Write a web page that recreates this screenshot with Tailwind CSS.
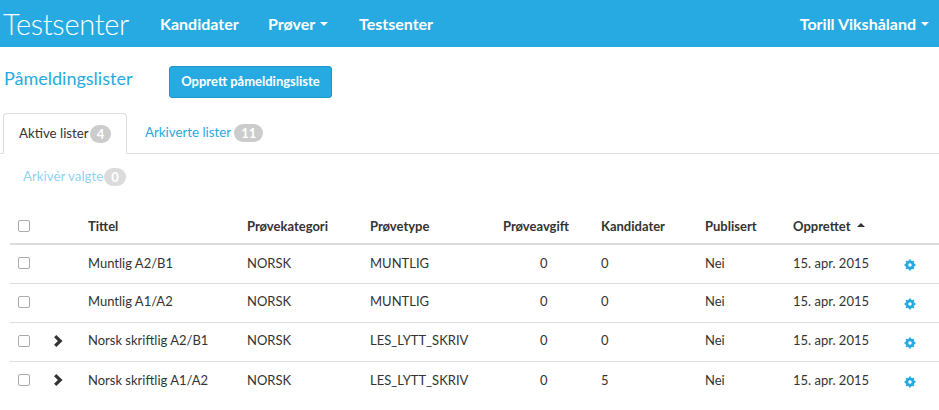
<!DOCTYPE html>
<html lang="en">
<head>
  <meta charset="UTF-8" />
  <title>Testsenter</title>
  <script src="https://cdn.jsdelivr.net/npm/@tailwindcss/browser@4"></script>
</head>
<body class="bg-white font-['Lato',sans-serif] text-[13px] text-[#333] overflow-hidden">

  <!-- navbar -->
  <nav class="bg-[#27aae1] h-[47px] flex items-center text-white">
    <div class="text-[29px] font-light tracking-[-0.3px] ml-[3px] w-[157px] leading-none">Testsenter</div>
    <div class="flex text-[16px] font-bold">
      <a class="w-[108px]">Kandidater</a>
      <a class="w-[91px] flex items-center">Prøver <span class="ml-[5px] w-0 h-0 border-x-4 border-x-transparent border-t-4 border-t-white"></span></a>
      <a>Testsenter</a>
    </div>
    <div class="ml-auto mr-[10px] text-[16px] font-bold flex items-center">Torill Vikshåland <span class="ml-[5px] w-0 h-0 border-x-4 border-x-transparent border-t-4 border-t-white"></span></div>
  </nav>

  <!-- heading -->
  <div class="flex h-[51px] pt-[19px] box-content">
    <h2 class="text-[18px] text-[#27aae1] ml-[4px] w-[165px] leading-[24px]">Påmeldingslister</h2>
    <button class="h-[32px] w-[163px] bg-[#27aae1] border border-[#1f97cb] rounded-[3px] text-white text-[13px] font-bold">Opprett påmeldingsliste</button>
  </div>

  <!-- tabs -->
  <div class="flex h-[41px] mt-[-4px] border-b border-[#ddd] pl-[3px] text-[13.3px]">
    <div class="w-[124px] h-[41px] bg-white border border-[#ddd] border-b-white rounded-t-[4px] flex items-center pl-[15px]">Aktive lister<span class="ml-[1px] bg-[#ccc] text-white text-[13px] font-bold rounded-full px-[7px] h-[18px] leading-[18px]">4</span></div>
    <div class="ml-[18px] h-[40px] flex items-center text-[#27aae1]">Arkiverte lister<span class="ml-[3px] bg-[#ccc] text-white text-[13px] font-bold rounded-full px-[7px] h-[18px] leading-[18px]">11</span></div>
  </div>

  <div class="pl-[23px] mt-[13px] h-[20px] flex items-center text-[13.3px] text-[#27aae1]/55">Arkivér valgte<span class="ml-[1px] bg-[#ccc]/70 text-white text-[13px] font-bold rounded-full px-[7px] h-[18px] leading-[18px]">0</span></div>

  <!-- table -->
  <div class="pl-[10px] mt-[22px]">
    <table class="table-fixed w-[929px] border-collapse">
      <colgroup>
        <col class="w-[34px]" /><col class="w-[36px]" /><col class="w-[159px]" /><col class="w-[123px]" /><col class="w-[133px]" /><col class="w-[98px]" /><col class="w-[104px]" /><col class="w-[88px]" /><col class="w-[112px]" /><col class="w-[42px]" />
      </colgroup>
      <thead>
        <tr class="h-[35px] border-b-2 border-[#ddd] text-left [&>th]:px-2 [&>th]:pb-[7px] [&>th]:align-bottom [&>th]:font-bold">
          <th><input type="checkbox" class="block mb-[4px] w-[12px] h-[12px] appearance-none border border-[#aaa] rounded-[2px] bg-white" /></th>
          <th></th>
          <th>Tittel</th>
          <th>Prøvekategori</th>
          <th>Prøvetype</th>
          <th>Prøveavgift</th>
          <th>Kandidater</th>
          <th>Publisert</th>
          <th><span class="flex items-center">Opprettet <span class="ml-[6px] mb-[2px] w-0 h-0 border-x-4 border-x-transparent border-b-4 border-b-[#333]"></span></span></th>
          <th></th>
        </tr>
      </thead>
      <tbody id="rows"></tbody>
    </table>
  </div>

  <script>
    const rows = [
      { title: "Muntlig A2/B1", type: "MUNTLIG", kandidater: 0, sub: false },
      { title: "Muntlig A1/A2", type: "MUNTLIG", kandidater: 0, sub: false },
      { title: "Norsk skriftlig A2/B1", type: "LES_LYTT_SKRIV", kandidater: 0, sub: true },
      { title: "Norsk skriftlig A1/A2", type: "LES_LYTT_SKRIV", kandidater: 5, sub: true }
    ];

    const chevron = `<svg width="10" height="12" viewBox="0 0 10 12" class="block ml-[1px]"><path d="M2.2 1.2 L7.2 6 L2.2 10.8" fill="none" stroke="#333" stroke-width="3.2"/></svg>`;
    const gear = `<svg width="12" height="12" viewBox="0 0 12 12" class="block mt-[3px] -ml-[1px]"><circle cx="6" cy="6" r="3.4" fill="none" stroke="#27aae1" stroke-width="2.4"/><path d="M6 .6V11.4M.6 6H11.4M2.2 2.2L9.8 9.8M9.8 2.2L2.2 9.8" stroke="#27aae1" stroke-width="1.8"/><circle cx="6" cy="6" r="1.7" fill="#fff"/></svg>`;

    document.getElementById("rows").innerHTML = rows.map(r => `
      <tr class="h-[39px] border-b border-[#ddd] last:border-b-0 [&>td]:px-2 [&>td]:pb-[1px]">
        <td><input type="checkbox" class="block w-[12px] h-[12px] appearance-none border border-[#aaa] rounded-[2px] bg-white" /></td>
        <td>${r.sub ? chevron : ''}</td>
        <td>${r.title}</td>
        <td>NORSK</td>
        <td>${r.type}</td>
        <td class="!pl-[45px]">0</td>
        <td>${r.kandidater}</td>
        <td>Nei</td>
        <td>15. apr. 2015</td>
        <td>${gear}</td>
      </tr>`).join('');
  </script>
</body>
</html>
